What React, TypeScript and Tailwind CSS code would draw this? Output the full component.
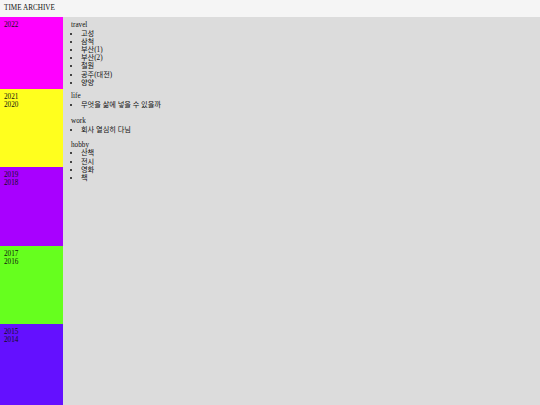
const YEARS = [
  { years: ['2022'], color: 'bg-[#ff00ff]', h: 'h-[72px]' },
  { years: ['2021', '2020'], color: 'bg-[#ffff1e]', h: 'h-[78px]' },
  { years: ['2019', '2018'], color: 'bg-[#a800ff]', h: 'h-[79px]' },
  { years: ['2017', '2016'], color: 'bg-[#66ff1e]', h: 'h-[78px]' },
  { years: ['2015', '2014'], color: 'bg-[#6410ff]', h: 'flex-1' },
];

const SECTIONS = [
  { title: 'travel', mt: 'mt-0', items: ['고성', '삼척', '부산(1)', '부산(2)', '철원', '공주(대전)', '양양'] },
  { title: 'life', mt: 'mt-[6px]', items: ['무엇을 삶에 넣을 수 있을까'] },
  { title: 'work', mt: 'mt-[9.5px]', items: ['회사 열심히 다님'] },
  { title: 'hobby', mt: 'mt-[7.5px]', items: ['산책', '전시', '영화', '책'] },
];

export default function App() {
  return (
    <div
      className="flex h-[405px] w-[540px] flex-col text-[7.2px] leading-[7.7px] text-[#111]"
      style={{ fontFamily: '"Liberation Serif", "Noto Sans CJK KR", serif' }}
    >
      <header className="flex h-[17px] shrink-0 items-center bg-[#f5f5f5] px-1">TIME ARCHIVE</header>
      <div className="flex flex-1 bg-[#dcdcdc]">
        <aside className="flex w-[63px] flex-col">
          {YEARS.map((y) => (
            <div key={y.years[0]} className={`${y.color} ${y.h} px-1 pt-[4.8px]`}>
              {y.years.map((yr) => (
                <div key={yr}>{yr}</div>
              ))}
            </div>
          ))}
        </aside>
        <main className="flex flex-col pl-2 pt-[4.8px]">
          {SECTIONS.map((s) => (
            <section key={s.title} className={s.mt}>
              <div>{s.title}</div>
              <ul className="list-disc pl-[10px]">
                {s.items.map((it) => (
                  <li key={it} className="leading-[8.2px]">{it}</li>
                ))}
              </ul>
            </section>
          ))}
        </main>
      </div>
    </div>
  );
}
